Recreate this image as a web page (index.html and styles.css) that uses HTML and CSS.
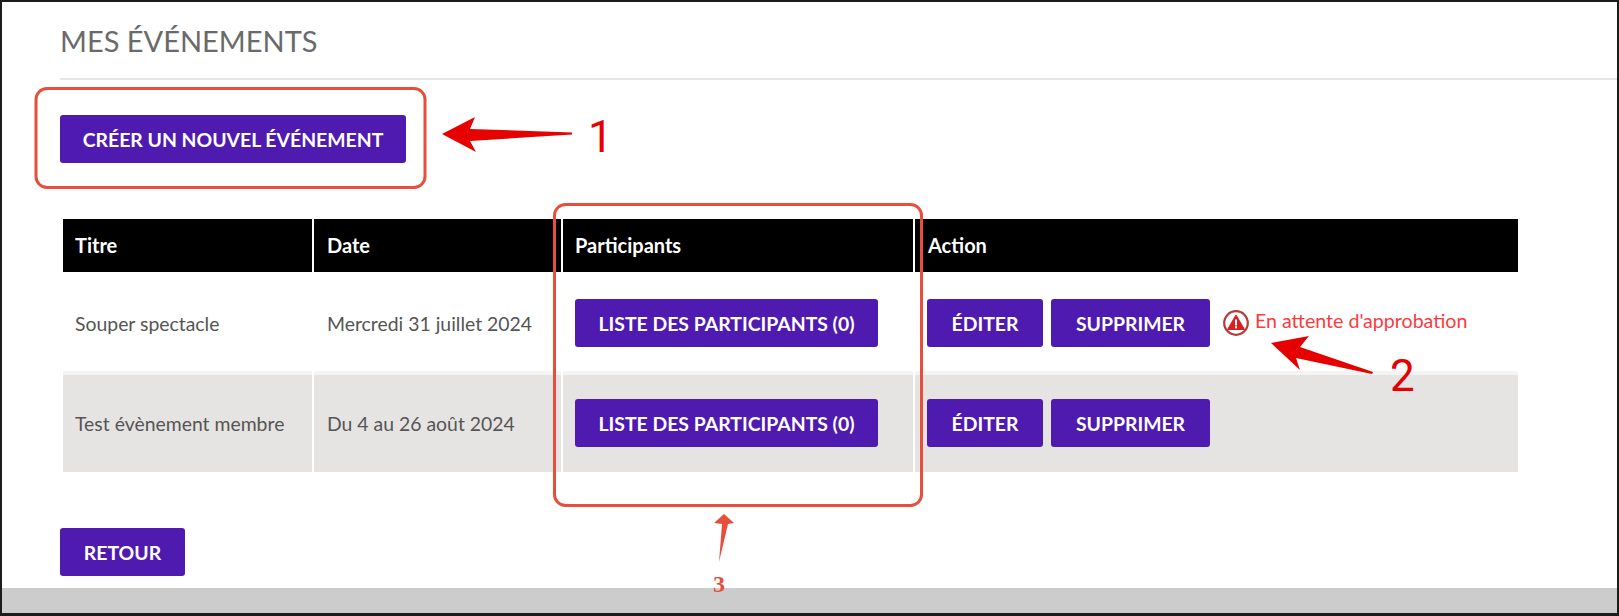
FILE: index.html
```html
<!DOCTYPE html>
<html lang="fr">
<head>
    <meta charset="UTF-8">
    <meta name="viewport" content="width=device-width, initial-scale=1.0">
    <title>Mes événements</title>
    <link rel="stylesheet" href="styles.css">
</head>
<body>
    <div class="frame">
        <main class="content">
            <h1 class="page-title">MES ÉVÉNEMENTS</h1>

            <a href="#" class="btn btn-create">CRÉER UN NOUVEL ÉVÉNEMENT</a>

            <table class="events">
                <thead>
                    <tr>
                        <th class="col-title">Titre</th>
                        <th class="col-date">Date</th>
                        <th class="col-people">Participants</th>
                        <th class="col-action">Action</th>
                    </tr>
                </thead>
                <tbody>
                    <tr>
                        <td>Souper spectacle</td>
                        <td class="col-date">Mercredi 31 juillet 2024</td>
                        <td><a href="#" class="btn btn-people">LISTE DES PARTICIPANTS (0)</a></td>
                        <td>
                            <div class="actions">
                                <a href="#" class="btn btn-edit">ÉDITER</a>
                                <a href="#" class="btn btn-delete">SUPPRIMER</a>
                                <span class="status">
                                    <svg class="status-icon" viewBox="0 0 26 26" width="26" height="26">
                                        <circle cx="13" cy="13" r="11.8" fill="#fff" stroke="#b83a3a" stroke-width="2.2"/>
                                        <path d="M13 5 L21.5 19.5 H4.5 Z" fill="#d81e1e" stroke="#d81e1e" stroke-linejoin="round"/>
                                        <rect x="12" y="9.5" width="2" height="6" fill="#fff"/>
                                        <rect x="12" y="16.3" width="2" height="2" fill="#fff"/>
                                    </svg>
                                    <span class="status-text">En attente d'approbation</span>
                                </span>
                            </div>
                        </td>
                    </tr>
                    <tr>
                        <td>Test évènement membre</td>
                        <td class="col-date">Du 4 au 26 août 2024</td>
                        <td><a href="#" class="btn btn-people">LISTE DES PARTICIPANTS (0)</a></td>
                        <td>
                            <div class="actions">
                                <a href="#" class="btn btn-edit">ÉDITER</a>
                                <a href="#" class="btn btn-delete">SUPPRIMER</a>
                            </div>
                        </td>
                    </tr>
                </tbody>
            </table>

            <a href="#" class="btn btn-back">RETOUR</a>
        </main>

        <div class="page-footer"></div>

        <!-- annotations drawn over the screenshot -->
        <svg class="notes" viewBox="0 0 1619 616" width="1619" height="616">
            <rect class="note-box" x="36" y="88.5" width="389" height="99" rx="11"/>
            <rect class="note-box" x="554.5" y="204.5" width="367" height="301" rx="11"/>

            <polygon class="note-arrow" points="442,134 475,117 470,129 572,132.5 572,134.5 470,141 476,152"/>
            <text class="note-num" x="588" y="152">1</text>

            <polygon class="note-arrow" points="1271,343 1309,336 1300,347 1373,372 1372,374 1296,358 1300,370"/>
            <text class="note-num" x="1390" y="391">2</text>

            <polygon class="note-arrow-alt" points="724,514 734,523 728,524 719,562 722,524 714,523"/>
            <text class="note-num-alt" x="719" y="592">3</text>
        </svg>
    </div>
</body>
</html>
```

FILE: styles.css
```css
/* General Reset */
* {
    margin: 0;
    padding: 0;
    box-sizing: border-box;
}

body {
    font-family: Lato, 'Liberation Sans', sans-serif;
    background: #fff;
    color: #555;
    overflow: hidden;
}

/* Outer frame of the screenshot */
.frame {
    position: relative;
    display: flex;
    flex-direction: column;
    height: 616px;
    border: 2px solid #1c1c1c;
    border-bottom-width: 3px;
    background: #fff;
}

.content {
    flex-grow: 1;
    padding-left: 58px;
}

/* Page Heading */
.page-title {
    height: 78px;
    padding-top: 20px;
    font-size: 29px;
    line-height: 38px;
    font-weight: 400;
    color: #6a6a6a;
    border-bottom: 2px solid #e6e6e6;
}

/* Buttons */
.btn {
    display: block;
    height: 48px;
    line-height: 50px;
    font-size: 19.4px;
    font-weight: 700;
    text-align: center;
    color: #fff;
    text-decoration: none;
    white-space: nowrap;
    background: #4f1ab0;
    border-radius: 3px;
}

.btn-create {
    width: 346px;
    margin-top: 35px;
}

.btn-people {
    width: 303px;
}

.btn-edit {
    width: 116px;
}

.btn-delete {
    width: 159px;
}

.btn-back {
    width: 125px;
    margin-top: 56px;
}

/* Events table */
.events {
    width: 1459px;
    margin: 56px 0 0 1px;
    border-collapse: separate;
    border-spacing: 2px 0;
    table-layout: fixed;
    font-size: 19.4px;
}

.events th {
    height: 53px;
    padding: 0 12px 2px;
    text-align: left;
    font-size: 20px;
    font-weight: 700;
    color: #fff;
    background: #000;
}

.col-title {
    width: 249px;
}

.events th.col-date {
    width: 247px;
    padding-left: 13px;
}

.col-people {
    width: 350px;
}

.events th.col-action {
    padding-left: 13px;
}

.events td {
    padding: 24px 12px 25px;
    height: 97px;
    vertical-align: middle;
    white-space: nowrap;
}

.events td.col-date {
    padding-left: 13px;
}

.events tbody tr:first-child td {
    height: 103px;
    padding-top: 27px;
    padding-bottom: 24px;
    border-bottom: 4px solid #f4f4f4;
}

.events tbody tr:last-child td {
    background: #e5e4e3;
}

.actions {
    display: flex;
    align-items: center;
    gap: 8px;
}

/* Approval status */
.status {
    display: flex;
    align-items: center;
    gap: 6px;
    margin-left: 5px;
}

.status-text {
    margin-bottom: 6px;
    font-size: 19.6px;
    color: #fb3a3f;
}

.status-icon {
    flex-shrink: 0;
}

/* Grey strip at the bottom */
.page-footer {
    height: 25px;
    background: #ccc;
}

/* Annotations */
.notes {
    position: absolute;
    top: -2px;
    left: -2px;
    pointer-events: none;
}

.note-box {
    fill: none;
    stroke: #e74f3c;
    stroke-width: 3;
}

.note-arrow {
    fill: #e60000;
}

.note-arrow-alt {
    fill: #e74f3c;
}

.note-num {
    font-family: Roboto, 'Liberation Sans', sans-serif;
    font-size: 44px;
    font-weight: 400;
    fill: #e60000;
}

.note-num-alt {
    font-family: 'Liberation Serif', serif;
    font-size: 24px;
    font-weight: 700;
    text-anchor: middle;
    fill: #e74f3c;
}
```
